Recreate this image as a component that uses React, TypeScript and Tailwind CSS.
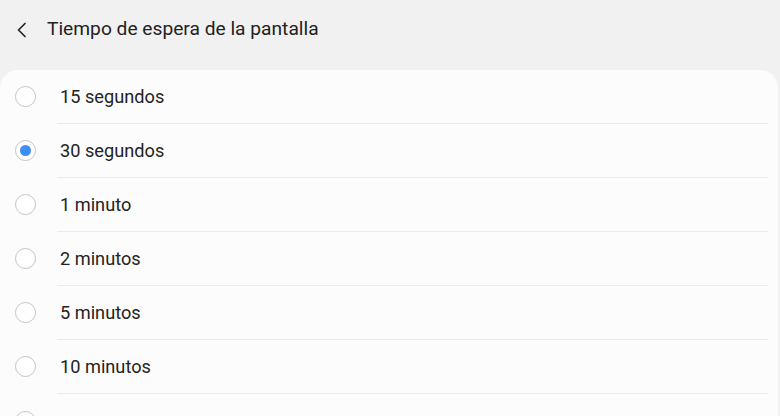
const OPTIONS = [
  "15 segundos",
  "30 segundos",
  "1 minuto",
  "2 minutos",
  "5 minutos",
  "10 minutos",
];

const SELECTED = "30 segundos";

function Radio({ checked }: { checked: boolean }) {
  return (
    <span className="w-[21px] h-[21px] rounded-full border border-[#c4c4c4] flex items-center justify-center bg-white shrink-0">
      {checked && <span className="w-[11px] h-[11px] rounded-full bg-[#3d8ef0]" />}
    </span>
  );
}

export default function App() {
  return (
    <div
      className="w-[780px] h-[416px] overflow-hidden bg-[#f1f1f1] flex flex-col"
      style={{ fontFamily: "Roboto, 'Noto Sans', sans-serif" }}
    >
      {/* Header */}
      <div className="h-[70px] shrink-0 flex items-center pl-[16px] pb-[11px]">
        <svg width="12" height="16" viewBox="0 0 12 16" fill="none" stroke="#262626" strokeWidth="1.7" strokeLinecap="round" strokeLinejoin="round">
          <path d="M9 1.5 L2.5 8 L9 14.5" />
        </svg>
        <span className="ml-[19px] text-[19.2px] text-[#222222]">Tiempo de espera de la pantalla</span>
      </div>

      {/* Options card */}
      <div className="flex-1 bg-[#fcfcfc] rounded-[18px] mr-[2px] flex flex-col">
        {OPTIONS.map((opt) => (
          <div key={opt} className="h-[54px] shrink-0 flex flex-col">
            <div className="flex-1 flex items-center pl-[15px]">
              <Radio checked={opt === SELECTED} />
              <span className="ml-[24px] text-[18.2px] text-[#232323]">{opt}</span>
            </div>
            <div className="h-px bg-[#ebebeb] ml-[57px] mr-[10px]" />
          </div>
        ))}
        {/* next row, scrolled below the fold */}
        <div className="h-[54px] shrink-0 flex items-center pl-[15px]">
          <Radio checked={false} />
        </div>
      </div>
    </div>
  );
}
